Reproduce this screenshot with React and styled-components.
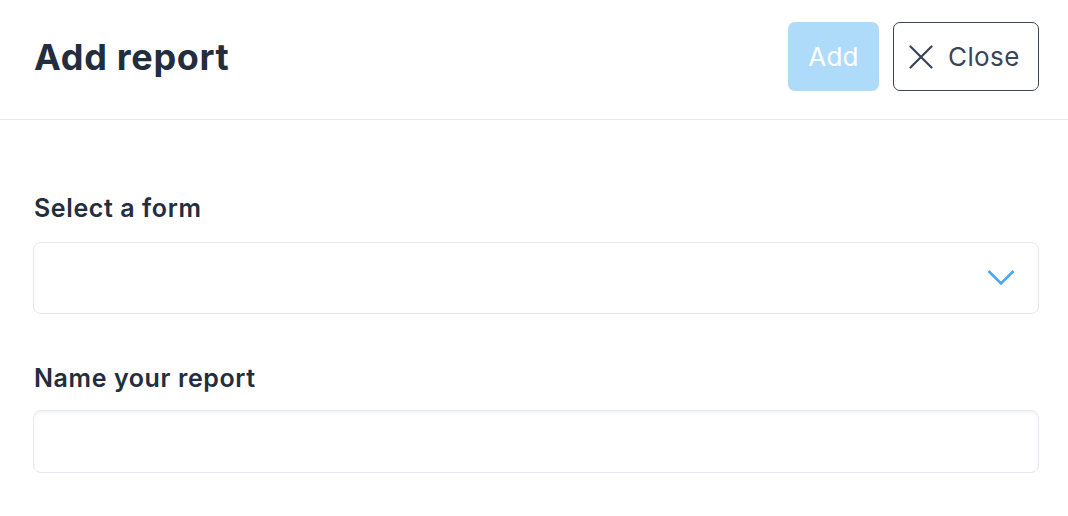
import React from 'react'
import styled, { createGlobalStyle } from 'styled-components'

const Global = createGlobalStyle`
  body {
    margin: 0;
    background: #fff;
    font-family: Inter, "Open Sans", "Liberation Sans", sans-serif;
  }
`

const App = () => {
  return (
    <Page>
      <Global />
      <Header>
        <Title>Add report</Title>
        <Actions>
          <PrimaryButton disabled>Add</PrimaryButton>
          <OutlineButton>
            <svg width="24" height="24" viewBox="0 0 24 24" fill="none" stroke="currentColor" strokeWidth="2.2" strokeLinecap="round">
              <path d="M1.5 1.5l21 21M22.5 1.5l-21 21" />
            </svg>
            Close
          </OutlineButton>
        </Actions>
      </Header>
      <Body>
        <Field>
          <Label>Select a form</Label>
          <SelectBox>
            <svg width="28" height="18" viewBox="0 0 28 18" fill="none" stroke="#4aa8f0" strokeWidth="2.6">
              <path d="M1.5 2l12.5 12.5L26.5 2" />
            </svg>
          </SelectBox>
        </Field>
        <Field>
          <Label>Name your report</Label>
          <TextInput />
        </Field>
      </Body>
    </Page>
  )
}

const Page = styled.div`
  width: 100%;
  min-height: 516px;
  color: #222d3d;
`

const Header = styled.header`
  display: flex;
  align-items: center;
  justify-content: space-between;
  height: 119px;
  padding: 0 29px 0 34px;
  border-bottom: 1px solid #e7e8ee;
`

const Title = styled.h1`
  margin: 0 0 6px;
  font-size: 36px;
  font-weight: 700;
  line-height: 44px;
  letter-spacing: 0.7px;
  color: #222d3d;
`

const Actions = styled.div`
  display: flex;
  gap: 14px;
  margin-bottom: 6px;
`

const PrimaryButton = styled.button`
  height: 69px;
  width: 91px;
  border: none;
  border-radius: 7px;
  background: #aedbfa;
  color: #fff;
  font-family: inherit;
  font-size: 26px;
  letter-spacing: 0.3px;
  padding: 0;
`

const OutlineButton = styled.button`
  display: flex;
  align-items: center;
  gap: 15px;
  height: 69px;
  width: 146px;
  padding: 0 0 0 15px;
  border: 1px solid #3a4455;
  border-radius: 7px;
  background: #fff;
  color: #3a4455;
  font-family: inherit;
  font-size: 26px;
  letter-spacing: 0.4px;
`

const Body = styled.main`
  display: flex;
  flex-direction: column;
  gap: 50px;
  padding: 74px 29px 0 33px;
`

const Field = styled.div`
  display: flex;
  flex-direction: column;
  gap: 18px;
`

const Label = styled.label`
  font-size: 25px;
  font-weight: 600;
  line-height: 28px;
  letter-spacing: 0.6px;
  color: #222d3d;
  padding-left: 1px;
`

const SelectBox = styled.div`
  display: flex;
  align-items: center;
  justify-content: flex-end;
  height: 70px;
  margin-top: 2px;
  padding-right: 23px;
  border: 1px solid #e6e7f1;
  border-radius: 8px;
  background: #fff;
`

const TextInput = styled.input`
  height: 63px;
  box-sizing: border-box;
  border: 1px solid #e6e7f1;
  border-radius: 8px;
  box-shadow: inset 0 2px 3px rgba(20, 30, 80, 0.06);
  outline: none;
`

export default App
